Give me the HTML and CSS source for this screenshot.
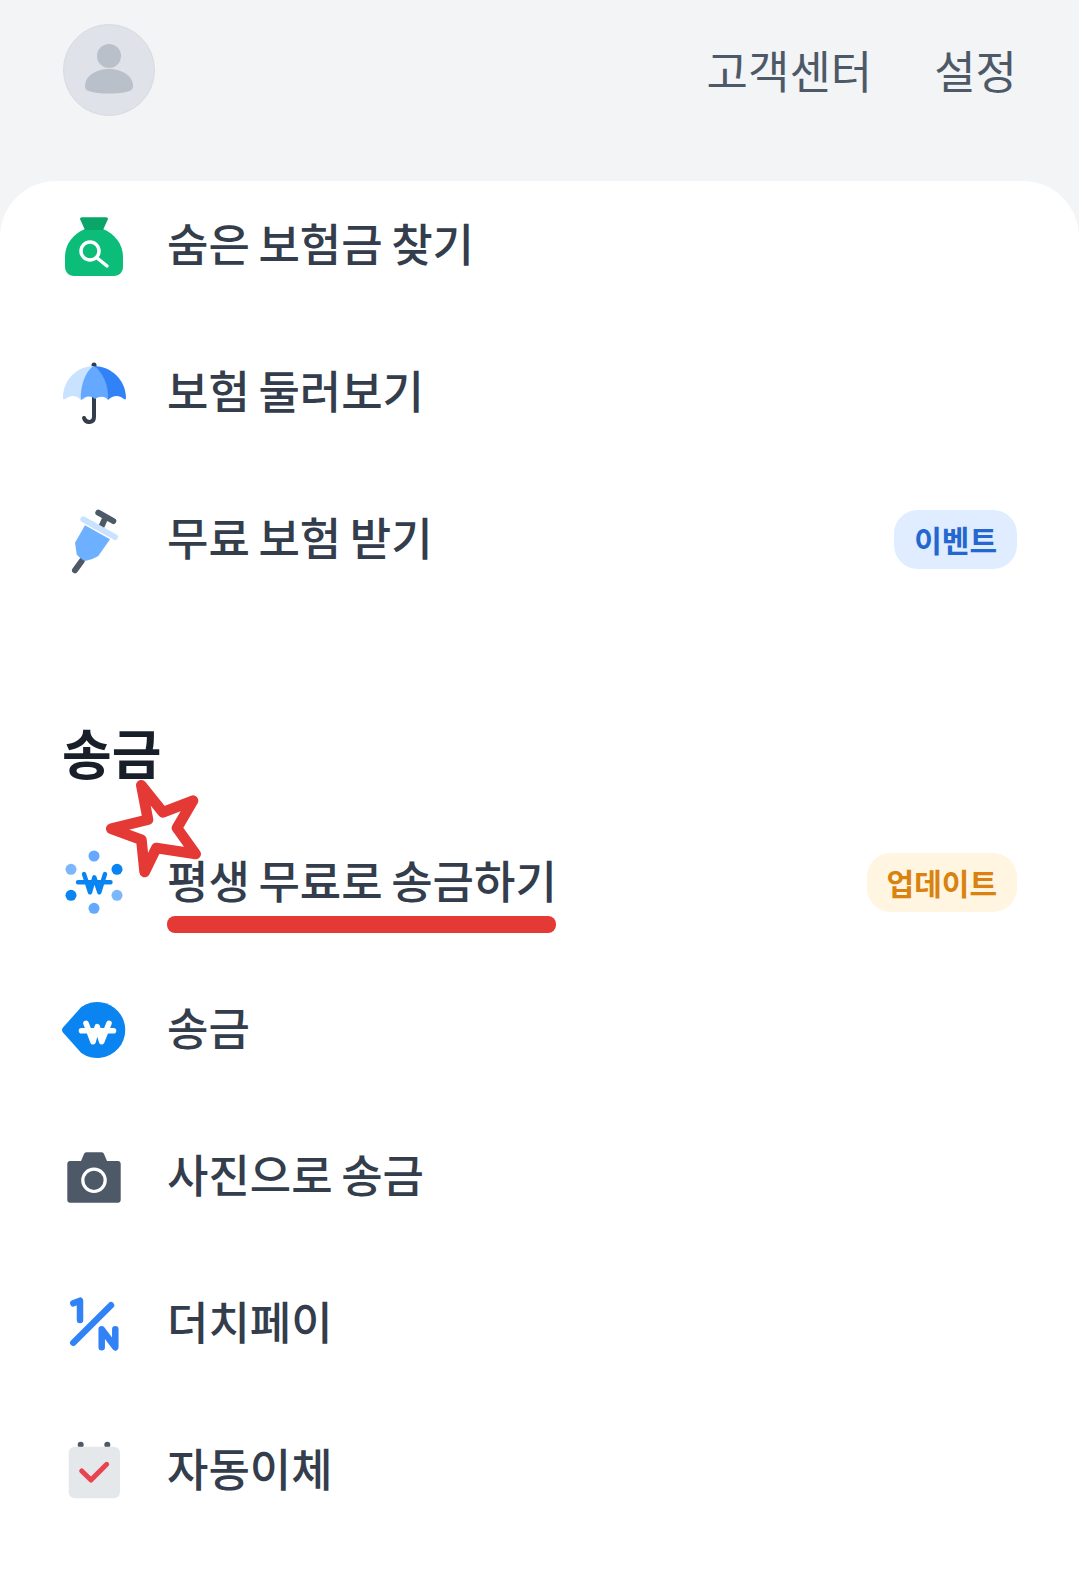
FILE: index.html
```html
<!DOCTYPE html>
<html lang="ko">
<head>
    <meta charset="UTF-8">
    <link rel="stylesheet" href="styles.css">
</head>
<body>
<header class="top">
    <div class="avatar">
        <svg viewBox="0 0 91 91" width="91" height="91">
            <circle cx="45" cy="31" r="12" fill="#b9c0ca"/>
            <path d="M21 61c0-10 11-17 24-17s24 7 24 17c0 4-3 5-7 6-5 1-11 1.500-17 1.500s-12-.5-17-1.500c-4-1-7-2-7-6z" fill="#b9c0ca"/>
        </svg>
    </div>
    <nav class="top-links">
        <a>고객센터</a>
        <a>설정</a>
    </nav>
</header>

<main class="sheet">
    <ul class="menu">
        <li class="item">
            <svg class="icon" viewBox="0 0 70 70">
                <path d="M26 19C14 24 6 34 6 47v10c0 5 4 9 9 9h40c5 0 9-4 9-9V47C64 34 56 24 44 19z" fill="#0bbd78"/>
                <path d="M21 9c0-1 1-1.700 2-1.700h24c1 0 2 .7 2 1.700l-5 11H26z" fill="#0aa568"/>
                <circle cx="31" cy="41" r="9" fill="none" stroke="#fff" stroke-width="3.500"/>
                <path d="M37.500 47.500L48 56" stroke="#fff" stroke-width="3.500" stroke-linecap="round"/>
            </svg>
            <span class="label">숨은 보험금 찾기</span>
        </li>
        <li class="item">
            <svg class="icon" viewBox="0 0 70 70">
                <path d="M35 8v1" stroke="#333d4b" stroke-width="5" stroke-linecap="round"/>
                <path d="M35 36v24c0 6-8 7-10 1" fill="none" stroke="#333d4b" stroke-width="4" stroke-linecap="round"/>
                <path d="M35 9C18 9 4 23 4 41c0 1 1 2 2 1 6-4 11-4 16 1 4-1 5-1 4-4 3-15 5-26 9-30z" fill="#c9e2ff"/>
                <path d="M35 9C27 13 21 29 22 43c4-4 10-5 14-1 5-3 10-3 13 1 2-14-5-30-14-34z" fill="#64a8ff"/>
                <path d="M35 9c9 6 15 20 14 34 5-5 11-5 16-1 1 1 2 0 2-1C67 23 52 9 35 9z" fill="#3182f6"/>
            </svg>
            <span class="label">보험 둘러보기</span>
        </li>
        <li class="item">
            <svg class="icon" viewBox="0 0 70 70">
                <path d="M22.700 57L16 66.300" stroke="#4e5968" stroke-width="6" stroke-linecap="round"/>
                <path d="M46.700 13L42.700 22M39.300 8.700L54.300 17" stroke="#4e5968" stroke-width="6" stroke-linecap="round"/>
                <path d="M26 21.300L51 35.300L39.300 52Q33 56 26 57Q20 54 17.700 50.300L16 38.700z" fill="#6cb0ff"/>
                <path d="M24.300 15.300L56 33" stroke="#c9e2ff" stroke-width="6" stroke-linecap="round"/>
            </svg>
            <span class="label">무료 보험 받기</span>
            <span class="badge badge-blue">이벤트</span>
        </li>
    </ul>

    <h2 class="section-title">송금</h2>

    <ul class="menu">
        <li class="item">
            <svg class="icon" viewBox="0 0 70 70">
                <circle cx="35" cy="9" r="5.500" fill="#64a8ff"/>
                <circle cx="58" cy="22.300" r="5.500" fill="#0a84f0"/>
                <circle cx="58" cy="48.300" r="5.500" fill="#7cb6fb"/>
                <circle cx="35" cy="61.300" r="5.500" fill="#64a8ff"/>
                <circle cx="12" cy="48.300" r="5.500" fill="#0a84f0"/>
                <circle cx="12" cy="22.300" r="5.500" fill="#7cb6fb"/>
                <path d="M25 27L31 45.300L35.300 30.300L40.300 45.300L46 27M19 35.300H51.500" fill="none" stroke="#0a84f0" stroke-width="4.400" stroke-linecap="round" stroke-linejoin="round"/>
            </svg>
            <span class="label">평생 무료로 송금하기<i class="underline"></i></span>
            <span class="badge badge-orange">업데이트</span>
            <svg class="star" viewBox="190 200 300 300">
                <path d="M305 222L370 303L460 268L412 350L468 428L350 410L315 482L305 385L215 352L325 325z" fill="#fff" stroke="#e53935" stroke-width="32" stroke-linejoin="round"/>
            </svg>
        </li>
        <li class="item">
            <svg class="icon" viewBox="0 0 70 70">
                <path d="M4 33.500L22.300 13A28 28 0 1 1 22.300 59L4 38.500Q2 36 4 33.500z" fill="#0a84f0"/>
                <path d="M27 29.300L34 47.700L38.300 32.700L42.700 47.700L50 29.300M22.500 36.700H54.500" fill="none" stroke="#fff" stroke-width="5.600" stroke-linecap="round" stroke-linejoin="round"/>
            </svg>
            <span class="label">송금</span>
        </li>
        <li class="item">
            <svg class="icon" viewBox="0 0 70 70">
                <path d="M11 20h11l3-7c.5-1 1-1.700 2.500-1.700h15c1.500 0 2 .7 2.500 1.700l3 7h11c1.500 0 2.700 1.200 2.700 2.700v36.300c0 1.500-1.200 2.700-2.700 2.700H11c-1.500 0-2.700-1.200-2.700-2.700V22.700c0-1.500 1.200-2.700 2.700-2.700z" fill="#4e5968"/>
                <circle cx="35" cy="39.300" r="11.200" fill="none" stroke="#fff" stroke-width="3.200"/>
            </svg>
            <span class="label">사진으로 송금</span>
        </li>
        <li class="item">
            <svg class="icon" viewBox="0 0 70 70">
                <path d="M14.300 54.700L52 17.300M14.300 15.300L21 12.700V32M42.700 59.300V41.300L56.300 59.300V41.300" fill="none" stroke="#3182f6" stroke-width="6.500" stroke-linecap="round" stroke-linejoin="round"/>
            </svg>
            <span class="label">더치페이</span>
        </li>
        <li class="item">
            <svg class="icon" viewBox="0 0 70 70">
                <circle cx="21.700" cy="9.700" r="3" fill="#4e5968"/>
                <circle cx="48.300" cy="9.700" r="3" fill="#4e5968"/>
                <rect x="9.700" y="11.700" width="51.300" height="51.600" rx="6" fill="#e5e8eb"/>
                <path d="M22.700 36L32 45L47.700 29.300" fill="none" stroke="#e8434f" stroke-width="5" stroke-linecap="round" stroke-linejoin="round"/>
            </svg>
            <span class="label">자동이체</span>
        </li>
    </ul>
</main>
</body>
</html>
```

FILE: styles.css
```css
* {
    box-sizing: border-box;
    font-family: "Noto Sans CJK KR", "Noto Sans", sans-serif;
}

body {
    margin: 0;
    background-color: #f2f4f6;
}

.top {
    height: 181px;
    padding: 24px 62px 0 63px;
    display: flex;
    justify-content: space-between;
    align-items: flex-start;
}

.avatar {
    width: 92px;
    height: 92px;
    border: 1px solid #d8dce2;
    border-radius: 50%;
    background-color: #dfe2e8;
}

.avatar svg {
    display: block;
}

.top-links {
    height: 90px;
    display: flex;
    align-items: center;
    gap: 62px;
    font-size: 45px;
    color: #4e5968;
}

.sheet {
    min-height: 1397px;
    padding: 14px 62px 0 59px;
    background-color: white;
    border-radius: 56px 56px 0 0;
}

.menu {
    margin: 0;
    padding: 0;
    list-style: none;
    display: flex;
    flex-direction: column;
    gap: 47px;
}

.item {
    position: relative;
    height: 100px;
    display: flex;
    align-items: center;
    gap: 38px;
}

.icon {
    flex: none;
    width: 70px;
    height: 70px;
}

.label {
    position: relative;
    margin-bottom: 5px;
    font-size: 45px;
    font-weight: 500;
    line-height: 60px;
    word-spacing: -4px;
    color: #333d4b;
}

.underline {
    position: absolute;
    left: 0;
    right: 1px;
    top: 66px;
    height: 17px;
    border-radius: 8px;
    background-color: #e53935;
}

.star {
    position: absolute;
    left: 44px;
    top: -54px;
    width: 100px;
    height: 100px;
}

.badge {
    margin-left: auto;
    height: 59px;
    padding: 0 20px;
    display: flex;
    align-items: center;
    border-radius: 24px;
    font-size: 30px;
    font-weight: 700;
}

.badge-blue {
    background-color: #e0ecff;
    color: #2367cf;
}

.badge-orange {
    background-color: #fff5e0;
    color: #d9820f;
}

.section-title {
    margin: 126px 0 43px 3px;
    height: 74px;
    font-size: 54px;
    font-weight: 700;
    line-height: 74px;
    color: #191f28;
}
```
